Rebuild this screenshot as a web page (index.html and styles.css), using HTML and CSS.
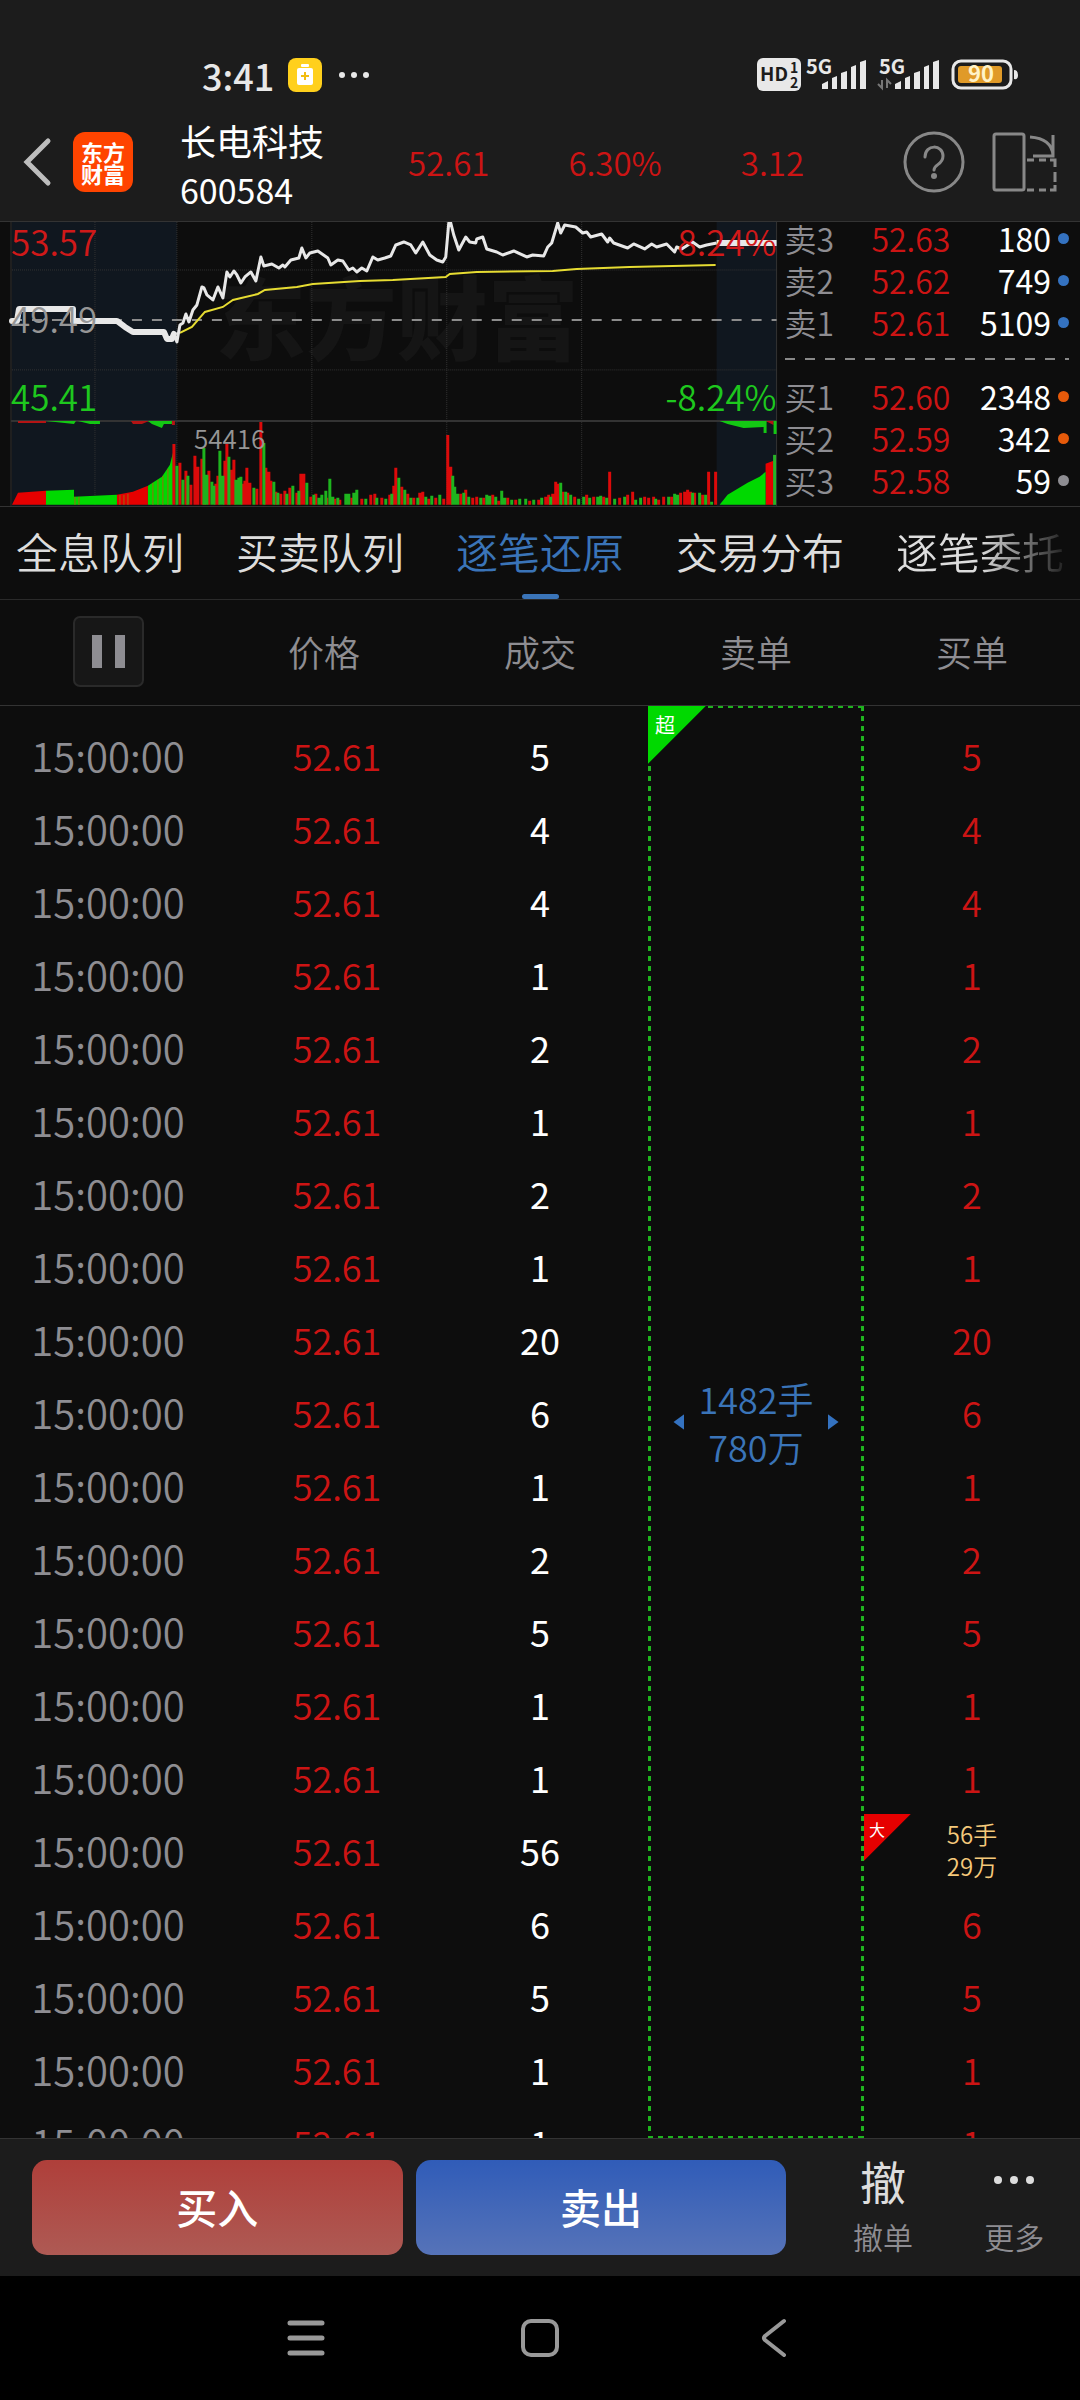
FILE: index.html
```html
<!DOCTYPE html>
<html lang="zh-CN">
<head>
  <meta charset="UTF-8">
  <meta name="viewport" content="width=device-width, initial-scale=1.0">
  <title>长电科技 600584</title>
  <link rel="stylesheet" href="styles.css">
</head>
<body>

<header class="top">
  <div class="status-bar">
    <div class="status-left">
      <span class="clock">3:41</span>
      <svg class="icon" width="34" height="34" viewBox="0 0 34 34" aria-hidden="true">
        <rect width="34" height="34" rx="8" fill="#ffd01c"/>
        <rect x="13" y="6" width="8" height="3" rx="1" fill="#fff"/>
        <rect x="9" y="10" width="16" height="17" rx="2" fill="#fff"/>
        <path d="M17 14v8M13 18h8" stroke="#f2bd10" stroke-width="2"/>
      </svg>
      <svg class="icon" width="32" height="8" viewBox="0 0 32 8" fill="#e8e8e8" aria-hidden="true">
        <circle cx="4" cy="4" r="3"/><circle cx="16" cy="4" r="3"/><circle cx="28" cy="4" r="3"/>
      </svg>
    </div>
    <svg class="icon" width="264" height="36" viewBox="0 0 264 36" fill="#e8e8e8" aria-hidden="true">
      <rect x="0" y="1" width="44" height="33" rx="6"/>
      <g class="icon-text" fill="#1c1c1c">
        <text x="3" y="24" font-size="19">HD</text>
        <text x="33" y="16" font-size="14">1</text>
        <text x="33" y="31" font-size="14">2</text>
      </g>
      <text class="icon-text" x="49" y="17" font-size="20">5G</text>
      <path d="M65 32v-5l6-3v8zM75 32V21l5-2v13zM84 32V16l6-2v18zM94 32V10l5-2v24zM103 32V5l6-2v29z"/>
      <text class="icon-text" x="122" y="17" font-size="20">5G</text>
      <path d="M125 23v8l-4-4M130 31v-8l4 4" fill="none" stroke="#777" stroke-width="2"/>
      <path d="M138 32v-5l6-3v8zM148 32V21l5-2v13zM157 32V16l6-2v18zM167 32V10l5-2v24zM176 32V5l6-2v29z"/>
      <rect x="196" y="4" width="58" height="27" rx="8" fill="none" stroke="#e8e8e8" stroke-width="3"/>
      <rect x="201" y="9" width="44" height="17" rx="3" fill="#e09a28"/>
      <path d="M257 13q4 0 4 5t-4 4z"/>
      <text class="icon-text" x="211" y="25" font-size="22" fill="#fff3c8">90</text>
    </svg>
  </div>

  <div class="title-bar">
    <button class="icon-button" type="button" aria-label="返回">
      <svg width="30" height="52" viewBox="0 0 30 52" fill="none" stroke="#bdbdbd" stroke-width="5" stroke-linecap="round">
        <path d="M25 5L4 26l21 21"/>
      </svg>
    </button>
    <div class="brand">东方<br>财富</div>
    <div class="stock">
      <h1 class="stock-name">长电科技</h1>
      <div class="stock-code">600584</div>
    </div>
    <div class="quote">
      <span>52.61</span>
      <span>6.30%</span>
      <span>3.12</span>
    </div>
    <button class="icon-button" type="button" aria-label="帮助">
      <svg width="62" height="62" viewBox="0 0 62 62" fill="none" stroke="#888" stroke-width="3">
        <circle cx="31" cy="31" r="29"/>
        <path d="M22 26c0-13 18-13 18-1 0 9-9 8-9 14" stroke-linecap="round"/>
        <circle cx="31" cy="45" r="3" fill="#888" stroke="none"/>
      </svg>
    </button>
    <button class="icon-button" type="button" aria-label="横屏">
      <svg width="66" height="62" viewBox="0 0 66 62" fill="none" stroke="#888" stroke-width="3">
        <rect x="2" y="3" width="30" height="56" rx="2"/>
        <path d="M38 6c15 1 22 8 23 18M61 4v21H41"/>
        <path d="M35 29h7M47 29h7M58 29h5v7M63 41v10M63 54v5h-5M54 59h-7M42 59h-7"/>
      </svg>
    </button>
  </div>
</header>

<section class="market">
  <svg class="chart" viewBox="0 0 778 284" role="img" aria-label="分时走势">
    <rect x="12" y="0" width="165" height="284" fill="#10171f"/>
    <rect x="717" y="0" width="60" height="284" fill="#10171f"/>
    <text class="watermark" x="215" y="131" font-size="91">东方财富</text>

    <!-- grid -->
    <path d="M95 0V284M177 0V284M312 0V284M447 0V284M582 0V284M12 48H777M12 148H777" stroke="#333" stroke-dasharray="1 1"/>
    <path d="M11 199H777" stroke="#333" stroke-width="2"/>
    <path d="M11 0V284M777 0V284" stroke="#333"/>
    <path d="M12 98H777" stroke="#8c8c8c" stroke-width="2" stroke-dasharray="10 10"/>

    <!-- call auction volume -->
    <path d="M12 283L18 271 46 269V283zM117 283V273L133 270 148 264V283zM766 283V242L774 239V283z" fill="#e60000"/>
    <path d="M46 283V269L74 268V283zM74 283V275L117 273V283zM148 283V264L162 255 170 243 173 231V283zM720 283L728 273 748 261 760 255 766 250V283z" fill="#00d900"/>
    <path d="M75 283V275M79 283V275M120 283V273M124 283V273M128 283V272M153 283V261M158 283V258M163 283V254M168 283V247" stroke="#9a6a10" stroke-width="1"/>
    <path d="M775 283V233" stroke="#28b428" stroke-width="3"/>
    <path d="M18 199h28v2H18zM131 199h18l-7 3h-9zM172 199h3v4h-3zM766 199h8v4z" fill="#b41414"/>
    <path d="M46 199h30l-2 3zM78 199h22v3H90zM148 199h24v3h-8l-2 4-10-4zM720 199h47v12h-3v-6l-20 1-16-4zM774 199h3v13h-3z" fill="#14c814"/>

    <!-- minute volume -->
    <path d="M174 283V222M180 283V241M186 283V249M191 283V263M195 283V234M198 283V245M202 283V237M205 283V260M209 283V249M216 283V262M218 283V254M225 283V239M227 283V222M231 283V248M234 283V238M243 283V262M245 283V259M247 283V246M250 283V261M257 283V267M261 283V200M266 283V246M269 283V250M271 283V259M276 283V270M281 283V272M285 283V269M290 283V266M297 283V271M301 283V252M304 283V252M311 283V275M316 283V272M327 283V276M335 283V277M340 283V278M352 283V276M362 283V277M371 283V273M375 283V272M382 283V276M390 283V273M394 283V264M396 283V246M402 283V265M408 283V272M414 283V276M420 283V271M423 283V270M429 283V277M436 283V276M444 283V277M448 283V213M451 283V245M461 283V272M466 283V268M473 283V276M477 283V275M484 283V276M493 283V273M499 283V279M508 283V276M516 283V278M530 283V279M539 283V278M546 283V275M549 283V273M553 283V272M556 283V260M558 283V262M563 283V270M568 283V271M575 283V275M587 283V273M594 283V275M604 283V275M610 283V250M620 283V276M628 283V273M633 283V270M645 283V275M649 283V276M654 283V275M659 283V278M664 283V275M672 283V275M681 283V271M685 283V270M688 283V268M691 283V270M695 283V271M703 283V273M709 283V250M716 283V250" stroke="#dc0a0a" stroke-width="3"/>
    <path d="M177 283V244M183 283V258M188 283V254M204 283V226M207 283V253M212 283V260M214 283V264M220 283V229M223 283V254M229 283V235M236 283V258M239 283V256M241 283V255M254 283V266M264 283V221M274 283V260M278 283V271M287 283V272M293 283V264M299 283V269M307 283V261M314 283V273M319 283V276M322 283V273M326 283V269M330 283V257M333 283V275M338 283V276M346 283V272M349 283V272M354 283V271M357 283V268M366 283V277M377 283V276M386 283V277M392 283V272M399 283V256M405 283V268M411 283V276M418 283V276M426 283V275M432 283V274M440 283V273M453 283V254M455 283V265M458 283V272M464 283V271M469 283V275M481 283V276M487 283V273M490 283V274M496 283V275M502 283V269M505 283V276M512 283V278M520 283V277M526 283V277M534 283V278M542 283V276M551 283V275M561 283V261M566 283V270M571 283V273M579 283V277M584 283V275M590 283V276M598 283V275M601 283V274M607 283V276M615 283V277M625 283V275M636 283V278M641 283V276M656 283V277M669 283V275M675 283V272M678 283V273M693 283V271M700 283V271M706 283V273M712 283V280" stroke="#1eb41e" stroke-width="3"/>

    <!-- average and price -->
    <path d="M180 111L192 105 205 90 223 85 233 78 258 72 265 68 297 65 313 62 360 59 393 58 446 55 450 52 477 50 553 49 577 47 630 45 716 43" fill="none" stroke="#e6dc32" stroke-width="2"/>
    <path d="M12 99H17L19 87H73V99H117L125 105 133 110H164L167 117H172L174 112" fill="none" stroke="#e8e8e8" stroke-width="6" stroke-linecap="round" stroke-linejoin="round"/>
    <path d="M174 112L177 120 180 103 183 101 186 92 189 100 193 88 197 83 202 65 204 66 207 73 213 78 218 65 223 76 227 50 230 55 234 49 237 53 241 61 245 55 251 50 256 59 261 35 264 44 272 42 279 46 283 43 285 45 291 38 299 36 302 26 306 36 310 31 318 29 328 36 331 43 338 38 343 39 349 48 353 46 357 50 362 46 367 49 373 35 378 38 385 36 391 34 396 23 404 20 411 23 416 31 423 20 430 33 437 38 443 40 446 35 449 1 451 1 454 13 459 28 466 15 470 20 476 21 477 17 483 15 487 27 497 30 503 33 514 29 527 35 533 33 544 34 548 25 552 21 558 1 561 11 565 3 576 5 583 11 587 10 591 15 602 12 608 20 610 16 614 21 628 26 634 22 645 27 652 22 657 25 667 22 675 30 677 25 682 27 693 20 700 25 707 23 717 21" fill="none" stroke="#e8e8e8" stroke-width="3" stroke-linejoin="round"/>
    <path d="M717 21H777" stroke="#e8e8e8" stroke-width="6"/>

    <g class="chart-label" font-size="35">
      <text x="11" y="34" fill="#d01919">53.57</text>
      <text x="11" y="111" fill="#969696">49.49</text>
      <text x="11" y="189" fill="#1ec81e">45.41</text>
      <text x="777" y="34" fill="#d01919" text-anchor="end">8.24%</text>
      <text x="777" y="189" fill="#1ec81e" text-anchor="end">-8.24%</text>
      <text x="194" y="227" fill="#969696" font-size="26">54416</text>
    </g>
  </svg>

  <div class="depth">
    <ul class="depth-list">
      <li><span class="side">卖3</span><span class="price">52.63</span><span class="qty">180</span><i class="dot blue"></i></li>
      <li><span class="side">卖2</span><span class="price">52.62</span><span class="qty">749</span><i class="dot blue"></i></li>
      <li><span class="side">卖1</span><span class="price">52.61</span><span class="qty">5109</span><i class="dot blue"></i></li>
    </ul>
    <div class="depth-divider"></div>
    <ul class="depth-list">
      <li><span class="side">买1</span><span class="price">52.60</span><span class="qty">2348</span><i class="dot orange"></i></li>
      <li><span class="side">买2</span><span class="price">52.59</span><span class="qty">342</span><i class="dot orange"></i></li>
      <li><span class="side">买3</span><span class="price">52.58</span><span class="qty">59</span><i class="dot"></i></li>
    </ul>
  </div>
</section>

<nav class="tabs">
  <a class="tab" href="#">全息队列</a>
  <a class="tab" href="#">买卖队列</a>
  <a class="tab active" href="#" aria-current="page">逐笔还原</a>
  <a class="tab" href="#">交易分布</a>
  <a class="tab" href="#">逐笔委托</a>
</nav>

<main class="ticks">
  <table class="tick-table">
    <thead>
      <tr>
        <th>
          <button class="pause" type="button" aria-label="暂停"><span></span><span></span></button>
        </th>
        <th>价格</th>
        <th>成交</th>
        <th>卖单</th>
        <th>买单</th>
      </tr>
    </thead>
    <tbody>
      <tr class="spacer"><td colspan="5"></td></tr>
      <tr><td>15:00:00</td><td>52.61</td><td>5</td><td></td><td>5</td></tr>
      <tr><td>15:00:00</td><td>52.61</td><td>4</td><td></td><td>4</td></tr>
      <tr><td>15:00:00</td><td>52.61</td><td>4</td><td></td><td>4</td></tr>
      <tr><td>15:00:00</td><td>52.61</td><td>1</td><td></td><td>1</td></tr>
      <tr><td>15:00:00</td><td>52.61</td><td>2</td><td></td><td>2</td></tr>
      <tr><td>15:00:00</td><td>52.61</td><td>1</td><td></td><td>1</td></tr>
      <tr><td>15:00:00</td><td>52.61</td><td>2</td><td></td><td>2</td></tr>
      <tr><td>15:00:00</td><td>52.61</td><td>1</td><td></td><td>1</td></tr>
      <tr><td>15:00:00</td><td>52.61</td><td>20</td><td></td><td>20</td></tr>
      <tr><td>15:00:00</td><td>52.61</td><td>6</td><td></td><td>6</td></tr>
      <tr><td>15:00:00</td><td>52.61</td><td>1</td><td></td><td>1</td></tr>
      <tr><td>15:00:00</td><td>52.61</td><td>2</td><td></td><td>2</td></tr>
      <tr><td>15:00:00</td><td>52.61</td><td>5</td><td></td><td>5</td></tr>
      <tr><td>15:00:00</td><td>52.61</td><td>1</td><td></td><td>1</td></tr>
      <tr><td>15:00:00</td><td>52.61</td><td>1</td><td></td><td>1</td></tr>
      <tr><td>15:00:00</td><td>52.61</td><td>56</td><td></td><td class="big-order"><span class="flag flag-big">大</span>56手<br>29万</td></tr>
      <tr><td>15:00:00</td><td>52.61</td><td>6</td><td></td><td>6</td></tr>
      <tr><td>15:00:00</td><td>52.61</td><td>5</td><td></td><td>5</td></tr>
      <tr><td>15:00:00</td><td>52.61</td><td>1</td><td></td><td>1</td></tr>
      <tr><td>15:00:00</td><td>52.61</td><td>1</td><td></td><td>1</td></tr>
    </tbody>
  </table>

  <!-- one sell order matched against every row in view -->
  <div class="sell-order">
    <span class="flag flag-super">超</span>
    <i class="arrow arrow-left"></i>
    <div>1482手<br>780万</div>
    <i class="arrow arrow-right"></i>
  </div>
</main>

<footer class="trade-bar">
  <button class="trade buy" type="button">买入</button>
  <button class="trade sell" type="button">卖出</button>
  <div class="actions">
    <button class="action" type="button">
      <span class="action-icon">撤</span>
      <span>撤单</span>
    </button>
    <button class="action" type="button">
      <span class="action-icon">
        <svg width="42" height="10" viewBox="0 0 42 10" fill="#ddd" aria-hidden="true">
          <circle cx="5" cy="5" r="4"/><circle cx="21" cy="5" r="4"/><circle cx="37" cy="5" r="4"/>
        </svg>
      </span>
      <span>更多</span>
    </button>
  </div>
</footer>

<div class="system-nav">
  <button class="icon-button" type="button" aria-label="最近任务">
    <svg width="40" height="40" viewBox="0 0 40 40" stroke="#999" stroke-width="5" stroke-linecap="round">
      <path d="M4 5h32M4 20h32M4 35h32"/>
    </svg>
  </button>
  <button class="icon-button" type="button" aria-label="主页">
    <svg width="40" height="40" viewBox="0 0 40 40" fill="none" stroke="#999" stroke-width="4">
      <rect x="3" y="3" width="34" height="34" rx="8"/>
    </svg>
  </button>
  <button class="icon-button" type="button" aria-label="返回">
    <svg width="40" height="40" viewBox="0 0 40 40" fill="none" stroke="#999" stroke-width="4" stroke-linecap="round" stroke-linejoin="round">
      <path d="M30 3L11 18q-2 2 0 4l19 15"/>
    </svg>
  </button>
</div>

</body>
</html>
```
FILE: styles.css
```css
* {
  box-sizing: border-box;
}

body {
  margin: 0;
  height: 100vh;
  display: flex;
  flex-direction: column;
  background-color: #0d0d0d;
  color: #fff;
  font-family: "Noto Sans CJK SC", sans-serif;
  font-weight: 350;
  overflow: hidden;
}

button {
  border: 0;
  padding: 0;
  background: none;
  color: inherit;
  font: inherit;
  cursor: pointer;
}

.icon-button {
  display: flex;
  align-items: center;
  justify-content: center;
}

.icon {
  flex: none;
}

.icon-text {
  font-weight: 700;
}

/* Status bar and stock title */
.top {
  background-color: #1c1c1c;
  border-bottom: 1px solid #333;
}

.status-bar {
  display: flex;
  align-items: center;
  justify-content: space-between;
  height: 110px;
  padding: 40px 59px 0 202px;
}

.status-left {
  display: flex;
  align-items: center;
  gap: 16px;
}

.clock {
  width: 70px;
  color: #e8e8e8;
  font-size: 36px;
  font-weight: 500;
  line-height: 40px;
}

.title-bar {
  display: flex;
  align-items: center;
  height: 111px;
  padding: 0 22px 7px 23px;
}

.brand {
  width: 60px;
  margin-left: 20px;
  padding: 8px 0;
  border-radius: 12px;
  background-color: #ff4400;
  font-size: 22px;
  font-weight: 700;
  line-height: 22px;
  text-align: center;
}

.stock {
  margin-left: 47px;
  padding-top: 5px;
}

.stock-name {
  margin: 0;
  font-size: 36px;
  font-weight: 400;
  line-height: 50px;
}

.stock-code {
  font-size: 34px;
  font-weight: 400;
  line-height: 50px;
}

.quote {
  flex: 1;
  display: flex;
  justify-content: space-between;
  padding: 0 99px 0 84px;
  color: #cc1414;
  font-size: 33px;
}

.title-bar .icon-button + .icon-button {
  margin-left: 27px;
}

/* Chart and order book */
.market {
  display: flex;
  border-bottom: 1px solid #333;
}

.chart {
  display: block;
  width: 72%;
}

.watermark {
  fill: #151515;
  font-weight: 900;
}

.depth {
  flex: 1;
  padding: 0 11px 0 7px;
  font-size: 32px;
}

.depth-list {
  display: grid;
  gap: 10px;
  margin: 0;
  padding: 0;
  list-style: none;
}

.depth-list li {
  display: grid;
  grid-template-columns: 50px 116fr 108fr 11px;
  align-items: center;
  line-height: 32px;
}

.depth .side {
  color: #8e8d92;
}

.depth .price {
  color: #cc1414;
  text-align: right;
}

.depth .qty {
  padding-right: 7px;
  font-weight: 400;
  text-align: right;
}

.dot {
  height: 11px;
  border-radius: 50%;
  background-color: #8e8d92;
}

.dot.blue {
  background-color: #3472c0;
}

.dot.orange {
  background-color: #e65a0a;
}

.depth-divider {
  height: 2px;
  margin: 20px 0;
  background: repeating-linear-gradient(90deg, #888 0 10px, transparent 10px 20px);
}

/* Tabs */
.tabs {
  display: flex;
  gap: 52px;
  height: 93px;
  padding: 0 16px;
  border-bottom: 1px solid #2a2a2a;
  overflow: hidden;
  font-size: 42px;
}

.tab {
  flex: none;
  display: flex;
  flex-direction: column;
  color: #ddd;
  line-height: 87px;
  text-decoration: none;
}

.tab.active {
  color: #3a74b8;
}

.tab.active::after {
  content: "";
  width: 37px;
  height: 5px;
  align-self: center;
  border-radius: 3px;
  background-color: #3a74b8;
}

.tab:last-child {
  background: linear-gradient(90deg, #ddd 50%, #222);
  background-clip: text;
  color: transparent;
}

/* Tick list */
.ticks {
  flex: 1;
  min-height: 0;
  position: relative;
  overflow: hidden;
}

.tick-table {
  width: 100%;
  table-layout: fixed;
  border-collapse: separate;
  border-spacing: 0;
  font-size: 36px;
  text-align: center;
}

.tick-table th {
  height: 106px;
  padding: 0 0 2px;
  border-bottom: 1px solid #333;
  color: #8e8d92;
  font-weight: 350;
}

.tick-table td {
  height: 73px;
  padding: 0;
  line-height: 48px;
}

.tick-table .spacer td {
  height: 13px;
  line-height: 13px;
}

.tick-table td:nth-child(1) {
  color: #8e8d92;
  font-size: 40px;
}

.tick-table td:nth-child(2) {
  padding-left: 26px;
  color: #cc1414;
}

.tick-table td:nth-child(3) {
  font-weight: 400;
}

.tick-table td:nth-child(5) {
  color: #cc1414;
}

.tick-table td.big-order {
  position: relative;
  color: #f5c97b;
  font-size: 24px;
  line-height: 32px;
}

.pause {
  display: inline-flex;
  align-items: center;
  justify-content: center;
  gap: 13px;
  width: 71px;
  height: 71px;
  border: 2px solid #2a2a2a;
  border-radius: 7px;
  background-color: #171717;
  vertical-align: middle;
}

.pause span {
  width: 10px;
  height: 33px;
  background-color: #8e8d92;
}

.sell-order {
  position: absolute;
  top: 106px;
  bottom: 0;
  left: 60%;
  width: 20%;
  display: flex;
  align-items: center;
  justify-content: center;
  gap: 14px;
  color: #3a74b8;
  font-size: 36px;
  line-height: 48px;
  text-align: center;
  background:
    repeating-linear-gradient(90deg, #1eb41e 0 5px, transparent 5px 10px) top / 100% 2px no-repeat,
    repeating-linear-gradient(90deg, #1eb41e 0 5px, transparent 5px 10px) bottom / 100% 2px no-repeat,
    repeating-linear-gradient(#1eb41e 0 5px, transparent 5px 10px) left / 3px 100% no-repeat,
    repeating-linear-gradient(#1eb41e 0 5px, transparent 5px 10px) right / 3px 100% no-repeat;
}

.arrow {
  width: 11px;
  height: 16px;
  background-color: #3472c0;
}

.arrow-left {
  clip-path: polygon(100% 0, 100% 100%, 0 50%);
}

.arrow-right {
  clip-path: polygon(0 0, 100% 50%, 0 100%);
}

/* Corner flags over the order cells */
.flag {
  position: absolute;
  top: 0;
  left: 0;
  color: #fff;
  font-weight: 400;
  text-align: left;
  clip-path: polygon(0 0, 100% 0, 0 100%);
}

.flag-super {
  width: 58px;
  height: 58px;
  padding-left: 7px;
  background-color: #00d900;
  font-size: 20px;
  line-height: 38px;
}

.flag-big {
  width: 47px;
  height: 47px;
  padding-left: 5px;
  background-color: #e60000;
  font-size: 16px;
  line-height: 31px;
}

/* Bottom bars */
.trade-bar {
  display: flex;
  align-items: flex-start;
  gap: 13px;
  padding: 21px 0 18px 32px;
  border-top: 1px solid #333;
  background-color: #1c1c1c;
}

.trade {
  flex: 371;
  height: 95px;
  padding-bottom: 4px;
  border-radius: 15px;
  font-size: 41px;
  font-weight: 500;
}

.buy {
  background: linear-gradient(#af3f3a, #ae5a54);
}

.sell {
  background: linear-gradient(#305cb8, #5673b8);
}

.actions {
  flex: 263;
  display: flex;
  margin-left: 18px;
}

.action {
  flex: 1;
  display: flex;
  flex-direction: column;
  align-items: center;
  gap: 14px;
  color: #8e8d92;
  font-size: 30px;
  line-height: 44px;
}

.action-icon {
  display: flex;
  align-items: center;
  height: 40px;
  color: #ddd;
  font-size: 46px;
  font-weight: 400;
}

.system-nav {
  display: grid;
  grid-template-columns: repeat(3, 1fr);
  height: 124px;
  padding: 0 17.5%;
  background-color: #000;
}
```
